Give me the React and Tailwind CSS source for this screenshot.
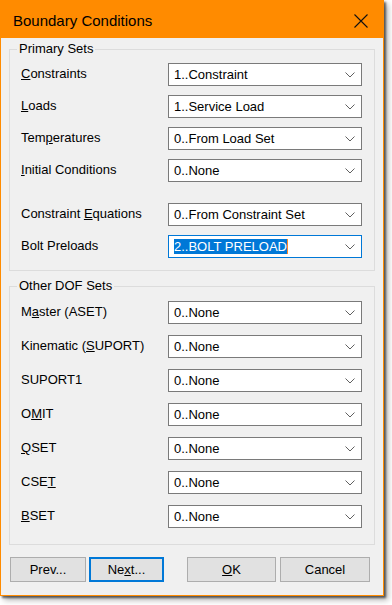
import React from "react";

const Chevron = () => (
  <svg width="10" height="6" viewBox="0 0 10 6" className="shrink-0">
    <path d="M0.5 0.5 L5 5 L9.5 0.5" fill="none" stroke="#606060" strokeWidth="1" />
  </svg>
);

const Label = ({ text, u }) => {
  if (u === undefined) return <span>{text}</span>;
  return (
    <span>
      {text.slice(0, u)}
      <u className="underline underline-offset-[1px]">{text[u]}</u>
      {text.slice(u + 1)}
    </span>
  );
};

const Select = ({ value, focused }) => (
  <div
    className={`w-[194px] h-[23px] bg-white border flex items-center pl-[5px] pr-[6px] ${
      focused ? "border-[#0078d7]" : "border-[#7a7a7a]"
    }`}
  >
    <div className="flex-1 flex items-center">
      {focused ? (
        <>
          <span className="bg-[#0078d7] text-white leading-[15px]">{value}</span>
          <span className="w-px h-[15px] bg-[#ff8728]" />
        </>
      ) : (
        <span>{value}</span>
      )}
    </div>
    <Chevron />
  </div>
);

const Row = ({ label, u, value, focused }) => (
  <div className="flex items-center h-[23px]">
    <div className="w-[158px] pl-[11px] -mt-[2px]">
      <Label text={label} u={u} />
    </div>
    <Select value={value} focused={focused} />
  </div>
);

const Group = ({ title, children, className }) => (
  <div className={`relative mx-[8px] border border-[#dcdcdc] ${className}`}>
    <span className="absolute -top-[9px] left-[7px] px-[2px] bg-[#f0f0f0] leading-[16px]">
      {title}
    </span>
    {children}
  </div>
);

const Button = ({ children, w, primary }) => (
  <button
    className={`h-[25px] ${w} bg-[#e1e1e1] flex items-center justify-center ${
      primary ? "border-2 border-[#0078d7]" : "border border-[#adadad]"
    }`}
  >
    {children}
  </button>
);

export default function App() {
  return (
    <div className="w-[392px] h-[605px] bg-white">
      <div
        className="w-[384px] h-[596px] bg-[#f0f0f0] border border-[#ff8b00] flex flex-col text-[13px] text-black shadow-[2px_2px_2px_rgba(0,0,0,0.55),4px_4px_6px_rgba(0,0,0,0.3)]"
        style={{ fontFamily: '"Liberation Sans", Arial, sans-serif' }}
      >
        <div className="h-[37px] bg-[#ff8b00] flex items-center justify-between pl-[11px] pr-[15px] pt-[3px] border-l border-[#ff8b00]">
          <span className="text-[15px]">Boundary Conditions</span>
          <svg width="14" height="14" viewBox="0 0 14 14">
            <path d="M0.5 0.5 L13.5 13.5 M13.5 0.5 L0.5 13.5" stroke="#111" strokeWidth="1.1" />
          </svg>
        </div>

        <Group title="Primary Sets" className="mt-[11px] pt-[13px] pb-[12px] flex flex-col gap-[9px]">
          <Row label="Constraints" u={0} value="1..Constraint" />
          <Row label="Loads" u={0} value="1..Service Load" />
          <Row label="Temperatures" u={3} value="0..From Load Set" />
          <Row label="Initial Conditions" u={0} value="0..None" />
          <div className="mt-[12px]">
            <Row label="Constraint Equations" u={11} value="0..From Constraint Set" />
          </div>
          <Row label="Bolt Preloads" value="2..BOLT PRELOAD" focused />
        </Group>

        <Group title="Other DOF Sets" className="mt-[15px] pt-[14px] pb-[16px] flex flex-col gap-[11px]">
          <Row label="Master (ASET)" u={1} value="0..None" />
          <Row label="Kinematic (SUPORT)" u={11} value="0..None" />
          <Row label="SUPORT1" value="0..None" />
          <Row label="OMIT" u={1} value="0..None" />
          <Row label="QSET" u={0} value="0..None" />
          <Row label="CSET" u={3} value="0..None" />
          <Row label="BSET" u={0} value="0..None" />
        </Group>

        <div className="flex mt-[12px] pl-[9px]">
          <Button w="w-[76px]">Prev...</Button>
          <div className="ml-[3px]">
            <Button w="w-[75px]" primary>
              <Label text="Next..." u={2} />
            </Button>
          </div>
          <div className="ml-[23px]">
            <Button w="w-[89px]">
              <Label text="OK" u={0} />
            </Button>
          </div>
          <div className="ml-[4px]">
            <Button w="w-[90px]">Cancel</Button>
          </div>
        </div>
      </div>
    </div>
  );
}
